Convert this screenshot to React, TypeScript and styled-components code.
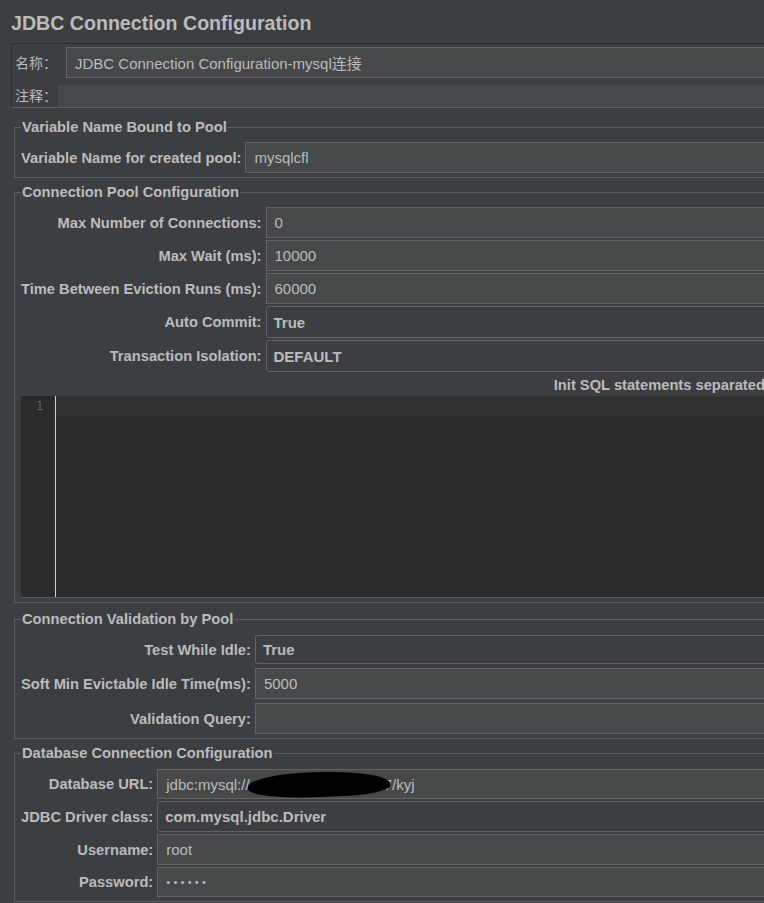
import React from 'react';
import styled, { createGlobalStyle } from 'styled-components';

const GlobalStyle = createGlobalStyle`
  html, body { margin: 0; padding: 0; background: #3c3f41; overflow: hidden; }
  body {
    font-family: "Liberation Sans", Arial, "Noto Sans CJK SC", sans-serif;
    color: #bbbbbb;
  }
  * { box-sizing: border-box; }
`;

const Page = styled.div`
  width: 1394px;
  background: #3c3f41;
  padding-bottom: 20px;
`;

const Title = styled.h1`
  margin: 0;
  height: 43px;
  padding: 11px 0 0 11px;
  font-family: "Liberation Sans", Arial, sans-serif;
  font-weight: bold;
  font-size: 19.6px;
  line-height: 24px;
  color: #bbbbbb;
`;

const NamePanel = styled.div`
  margin-left: 11px;
  border-top: 1px solid #2b2d2e;
  border-left: 1px solid #2b2d2e;
  border-bottom: 1px solid #5e6162;
  padding: 3px 0 0 0;
  display: flex;
  flex-direction: column;
  gap: 7px;
`;

const NameRow = styled.div<{ $labelWidth: number }>`
  display: grid;
  grid-template-columns: ${(p) => p.$labelWidth}px 1fr;
  align-items: center;
`;

const CjkLabel = styled.span`
  padding-left: 3px;
  margin-top: -2px;
  font-family: "Noto Sans CJK SC", "Liberation Sans", sans-serif;
  font-size: 14px;
  color: #bbbbbb;
`;

const TextField = styled.div<{ $h?: number }>`
  height: ${(p) => p.$h ?? 31}px;
  background: #45494a;
  border: 1px solid #646464;
  padding: 0 8px;
  display: flex;
  align-items: center;
  font-family: "Liberation Sans", Arial, "Noto Sans CJK SC", sans-serif;
  font-size: 15px;
  color: #bbbbbb;
  white-space: nowrap;
  position: relative;
`;

const CommentArea = styled.div`
  height: 22px;
  background: #45494a;
`;

const Combo = styled.div<{ $h?: number }>`
  height: ${(p) => p.$h ?? 31}px;
  background: #3c3f41;
  border: 1px solid #646464;
  border-radius: 3px;
  padding: 0 7px;
  display: flex;
  align-items: center;
  font-family: "Liberation Sans", Arial, sans-serif;
  font-weight: bold;
  font-size: 15px;
  color: #bbbbbb;
  white-space: nowrap;
`;

const Section = styled.fieldset<{ $mt: number; $pt?: number }>`
  margin: ${(p) => p.$mt}px 0 0 14px;
  padding: ${(p) => p.$pt ?? 7}px 0 4px 6px;
  border: 1px solid #5b5e60;
  border-right: none;
  min-width: 0;
`;

const Legend = styled.legend`
  padding: 0 1px;
  margin: 0;
  font-family: "Liberation Sans", Arial, sans-serif;
  font-weight: bold;
  font-size: 14.7px;
  line-height: 16px;
  color: #bbbbbb;
`;

const FormGrid = styled.div<{ $gap: number }>`
  display: grid;
  grid-template-columns: max-content 1fr;
  column-gap: 4px;
  row-gap: ${(p) => p.$gap}px;
  align-items: center;
`;

const Label = styled.label`
  justify-self: end;
  font-family: "Liberation Sans", Arial, sans-serif;
  font-weight: bold;
  font-size: 14.7px;
  color: #bbbbbb;
  white-space: nowrap;
`;

const InitLabel = styled.div`
  margin-top: 5px;
  text-align: center;
  font-family: "Liberation Sans", Arial, sans-serif;
  font-weight: bold;
  font-size: 14.7px;
  line-height: 16px;
  color: #bbbbbb;
`;

const Editor = styled.div`
  margin-top: 3px;
  height: 202px;
  background: #2b2b2b;
  border-bottom: 1px solid #5b5e60;
  display: grid;
  grid-template-columns: 35px 1fr;
`;

const Gutter = styled.div`
  border-right: 1px solid #d0d0d0;
  background: #2b2b2b;
  padding: 2px 0 0 15px;
  font-family: "DejaVu Sans Mono", "Liberation Mono", monospace;
  font-size: 12px;
  line-height: 16px;
  color: #606366;
`;

const CodeArea = styled.div`
  background: #2b2b2b;
`;

const CurrentLine = styled.div`
  height: 20px;
  background: #323232;
`;

const Redaction = styled.span`
  display: inline-block;
  position: relative;
  z-index: 1;
  width: 142px;
  height: 25px;
  margin: 0 -6px 0 -2px;
  background: #000;
  border-radius: 50% 60% 40% 50% / 55% 60% 40% 45%;
  transform: rotate(-2deg);
`;

const Dots = styled.span`
  font-size: 11px;
  letter-spacing: 3.3px;
`;

export default function App() {
  return (
    <Page>
      <GlobalStyle />
      <Title>JDBC Connection Configuration</Title>
      <NamePanel>
        <NameRow $labelWidth={54}>
          <CjkLabel>名称：</CjkLabel>
          <TextField>JDBC Connection Configuration-mysql连接</TextField>
        </NameRow>
        <NameRow $labelWidth={46}>
          <CjkLabel>注释：</CjkLabel>
          <CommentArea />
        </NameRow>
      </NamePanel>

      <Section $mt={11}>
        <Legend>Variable Name Bound to Pool</Legend>
        <FormGrid $gap={2}>
          <Label>Variable Name for created pool:</Label>
          <TextField>mysqlcfl</TextField>
        </FormGrid>
      </Section>

      <Section $mt={6}>
        <Legend>Connection Pool Configuration</Legend>
        <FormGrid $gap={2}>
          <Label>Max Number of Connections:</Label>
          <TextField>0</TextField>
          <Label>Max Wait (ms):</Label>
          <TextField>10000</TextField>
          <Label>Time Between Eviction Runs (ms):</Label>
          <TextField>60000</TextField>
          <Label>Auto Commit:</Label>
          <Combo $h={32}>True</Combo>
          <Label>Transaction Isolation:</Label>
          <Combo $h={32}>DEFAULT</Combo>
        </FormGrid>
        <InitLabel>Init SQL statements separated by new lines:</InitLabel>
        <Editor>
          <Gutter>1</Gutter>
          <CodeArea>
            <CurrentLine />
          </CodeArea>
        </Editor>
      </Section>

      <Section $mt={8} $pt={8}>
        <Legend>Connection Validation by Pool</Legend>
        <FormGrid $gap={4}>
          <Label>Test While Idle:</Label>
          <Combo $h={29}>True</Combo>
          <Label>Soft Min Evictable Idle Time(ms):</Label>
          <TextField>5000</TextField>
          <Label>Validation Query:</Label>
          <TextField />
        </FormGrid>
      </Section>

      <Section $mt={6} $pt={8}>
        <Legend>Database Connection Configuration</Legend>
        <FormGrid $gap={2}>
          <Label>Database URL:</Label>
          <TextField $h={30}>
            jdbc:mysql://
            <Redaction />
            7/kyj
          </TextField>
          <Label>JDBC Driver class:</Label>
          <Combo $h={31}>com.mysql.jdbc.Driver</Combo>
          <Label>Username:</Label>
          <TextField>root</TextField>
          <Label>Password:</Label>
          <TextField $h={30}>
            <Dots>••••••</Dots>
          </TextField>
        </FormGrid>
      </Section>
    </Page>
  );
}
